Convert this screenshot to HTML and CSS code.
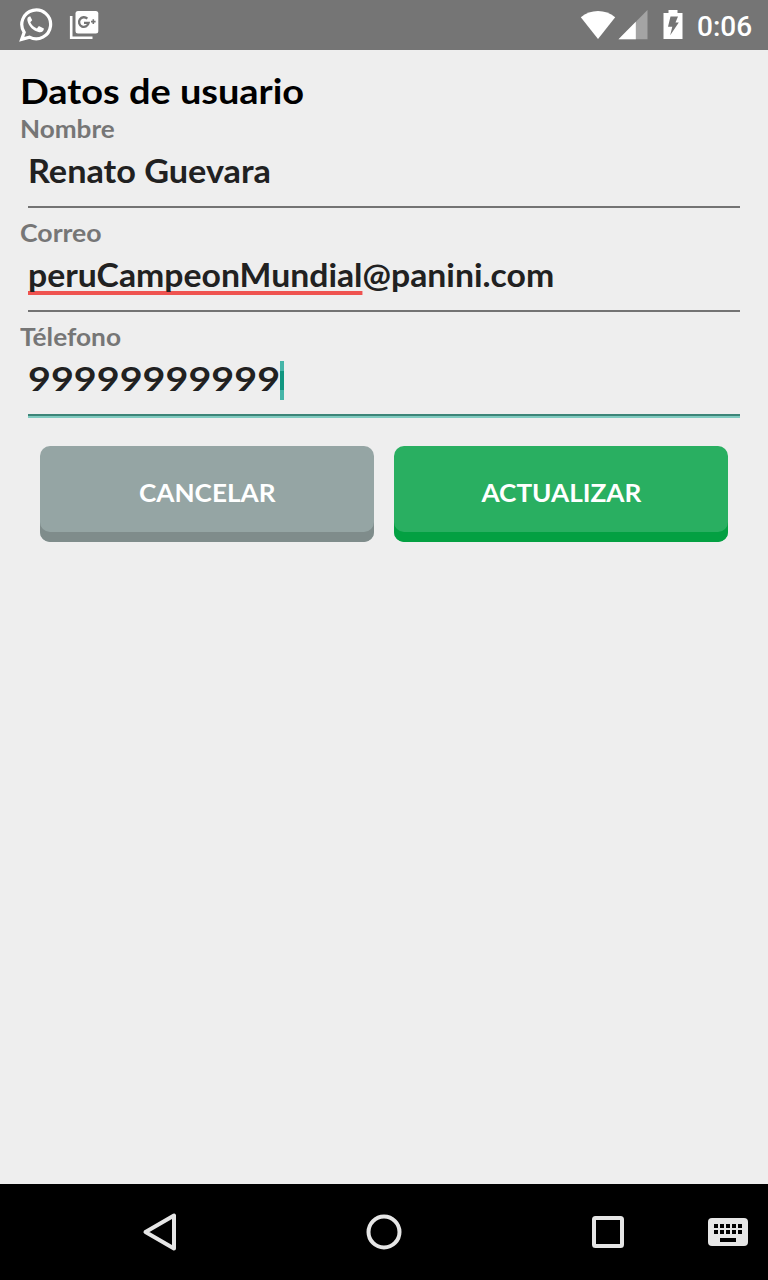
FILE: index.html
```
<!DOCTYPE html>
<html lang="es">
<head>
    <meta charset="UTF-8">
    <meta name="viewport" content="width=device-width, initial-scale=1.0">
    <title>Datos de usuario</title>
    <link rel="stylesheet" href="styles.css">
</head>
<body>

    <header class="status-bar">
        <div class="notifications">
            <svg width="34" height="36" viewBox="0 0 34 36">
                <path d="M2.700 32.400 5.200 25.300A14.400 14.400 0 1 1 10.500 30.100Z" fill="none" stroke="#fff" stroke-width="3.200"/>
                <path d="M11.200 9.300c-2 .2-3.300 2-2.800 4.300 1.300 6.200 6 10.500 11.800 11.700 2.700.4 4.700-1.300 4.700-3.700l-5-2.600-2 2.400c-3.200-1.300-5.200-3.200-6.600-6.100l1.900-2.100z" fill="#fff"/>
            </svg>
            <svg width="30" height="30" viewBox="0 0 30 30">
                <path d="M2.200 6v21.800H23.500" fill="none" stroke="#fff" stroke-width="2.600"/>
                <rect x="6.500" y="1" width="22.800" height="22.500" rx="2.500" fill="#fff"/>
                <path d="M18.300 8.700a4.800 4.800 0 1 0 1.300 4.200h-4.600" fill="none" stroke="#757575" stroke-width="2.400"/>
                <path d="M24.300 9.300v4.600M22 11.600h4.600" stroke="#757575" stroke-width="1.600"/>
            </svg>
        </div>
        <div class="system">
            <svg class="wifi" width="36" height="30" viewBox="0 0 36 30">
                <path d="M.8 7.200C10.500-1 25.500-1 35.200 7.200L18 29Z" fill="#fff"/>
            </svg>
            <svg class="signal" width="30" height="30" viewBox="0 0 30 30">
                <path d="M29.500 0v29.200H.5Z" fill="#a4a4a4"/>
                <path d="M17.800 11.800v17.400H.5Z" fill="#fff"/>
            </svg>
            <svg class="battery" width="20" height="30" viewBox="0 0 20 30">
                <path d="M5.500 0h9v3h5v26H.5V3h5Z" fill="#fff"/>
                <path d="M7.500 6.500h7.500l-2.500 6h3.300L7.200 25.300 9.300 16.800H5Z" fill="#757575"/>
            </svg>
            <span class="clock">0:06</span>
        </div>
    </header>

    <main class="container">
        <h1>Datos de usuario</h1>
        <div class="field">
            <div class="label nombre">Nombre</div>
            <div class="value"><span class="text-nombre">Renato Guevara</span></div>
        </div>
        <div class="field">
            <div class="label correo">Correo</div>
            <div class="value"><span class="text-correo"><span class="misspelled">peruCampeonMundial</span>@panini.com</span></div>
        </div>
        <div class="field">
            <div class="label telefono">Télefono</div>
            <div class="value focused"><span class="text-telefono">99999999999</span><i class="cursor"></i></div>
        </div>
        <div class="buttons">
            <button class="cancel"><span>CANCELAR</span></button>
            <button class="update"><span>ACTUALIZAR</span></button>
        </div>
    </main>

    <nav class="nav-bar">
        <svg width="36" height="40" viewBox="0 0 36 40">
            <path d="M3.500 20 32 3.500v33Z" fill="none" stroke="#e6e6e6" stroke-width="4" stroke-linejoin="round"/>
        </svg>
        <svg width="36" height="40" viewBox="0 0 36 40">
            <circle cx="18" cy="20" r="15.500" fill="none" stroke="#e6e6e6" stroke-width="4"/>
        </svg>
        <svg width="36" height="40" viewBox="0 0 36 40">
            <rect x="4" y="6" width="28" height="28" rx="1.500" fill="none" stroke="#e6e6e6" stroke-width="4"/>
        </svg>
        <svg class="keyboard" width="40" height="28" viewBox="0 0 40 28">
            <rect width="40" height="28" rx="4" fill="#e6e6e6"/>
            <path d="M6 8h28M6 14h28" stroke="#000" stroke-width="4" stroke-dasharray="4 2"/>
            <path d="M12 22h16" stroke="#000" stroke-width="4"/>
        </svg>
    </nav>

</body>
</html>
```
FILE: styles.css
```
* {
    margin: 0;
    padding: 0;
    box-sizing: border-box;
}

body {
    background: #eeeeee;
    font-family: 'Lato', sans-serif;
    height: 100vh;
    display: flex;
    flex-direction: column;
}

.status-bar {
    height: 50px;
    padding: 0 17px 0 19px;
    background: #757575;
    display: flex;
    justify-content: space-between;
    align-items: center;
}

.notifications,
.system {
    display: flex;
    align-items: center;
}

.notifications {
    gap: 16px;
}

.signal {
    margin-left: 2px;
}

.battery {
    margin-left: 15px;
}

.clock {
    margin-left: 14px;
    padding-top: 3px;
    width: 54px;
    color: #fff;
    font-family: 'Roboto', sans-serif;
    font-size: 28px;
    font-weight: 500;
    line-height: 36px;
    white-space: nowrap;
}

.container {
    flex: 1;
    padding: 20px 20px 0;
}

/* wide letterforms */
h1,
.label,
.value > span {
    transform-origin: left;
}

h1 {
    color: #000;
    font-size: 34px;
    font-weight: bold;
    line-height: 42px;
    width: max-content;
    transform: scaleX(1.115);
}

.field {
    height: 104px;
}

.label {
    height: 34px;
    width: max-content;
    color: #767676;
    font-size: 25px;
    font-weight: bold;
    line-height: 32px;
}

.nombre {
    transform: scaleX(1.045);
}

.correo {
    transform: scaleX(1.065);
}

.telefono {
    transform: scaleX(1.05);
}

.value {
    display: flex;
    height: 62px;
    margin: 0 8px;
    border-bottom: 2px solid #737373;
    color: #212121;
    font-size: 32px;
    font-weight: bold;
    line-height: 49px;
    white-space: nowrap;
}

.text-nombre {
    transform: scaleX(1.07);
}

.text-correo {
    transform: scaleX(1.055);
}

.text-telefono {
    flex: none;
    width: 204px;
    margin-right: 48px;
    transform: scaleX(1.235);
}

.misspelled {
    display: inline-block;
    height: 45px;
    border-bottom: 4px solid #ef5350;
}

.focused {
    height: 64px;
    border-bottom-color: #80cbc0;
    box-shadow: inset 0 -2px #3d8578;
}

.cursor {
    width: 4px;
    height: 39px;
    margin-top: 7px;
    background: linear-gradient(#45b5a8 10px, #109680 10px, #109680 29px, #45b5a8 29px);
}

.buttons {
    display: flex;
    gap: 20px;
    padding: 22px 20px 0;
}

button {
    flex: 1;
    height: 96px;
    padding-bottom: 4px;
    border: none;
    border-radius: 10px;
    color: #fff;
    font-family: inherit;
    font-size: 25px;
    font-weight: bold;
}

button span {
    display: inline-block;
    transform: scaleX(1.046);
}

.cancel {
    background: #95a5a4;
    box-shadow: inset 0 -10px #7f8c8b;
}

.update {
    background: #29af61;
    box-shadow: inset 0 -10px #03a042;
}

.nav-bar {
    height: 96px;
    padding: 0 20px 0 142px;
    background: #000;
    display: flex;
    align-items: center;
    gap: 188px;
}

.keyboard {
    flex: none;
    margin-left: -106px;
}
```
